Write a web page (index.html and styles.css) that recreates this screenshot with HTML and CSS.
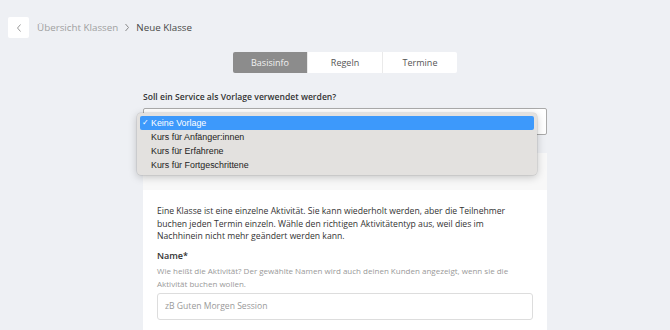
FILE: index.html
```html
<!DOCTYPE html>
<html lang="de">
<head>
  <meta charset="UTF-8" />
  <title>Neue Klasse</title>
  <link rel="stylesheet" href="styles.css">
</head>
<body>
  <div class="topbar">
    <button class="back-btn" aria-label="Zurück">
      <svg width="8" height="10" viewBox="0 0 8 10"><path d="M5.5 1.5 L2.5 5 L5.5 8.5" fill="none" stroke="#9a9a9a" stroke-width="1"/></svg>
    </button>
    <div class="breadcrumb">
      <span class="crumb-muted">Übersicht Klassen</span>
      <svg class="crumb-sep" width="6" height="9" viewBox="0 0 6 9"><path d="M1.5 1 L4.5 4.5 L1.5 8" fill="none" stroke="#8a8a8a" stroke-width="1"/></svg>
      <span class="crumb-current">Neue Klasse</span>
    </div>
  </div>

  <div class="column">
    <div class="tabs">
      <div class="tab active">Basisinfo</div>
      <div class="tab">Regeln</div>
      <div class="tab">Termine</div>
    </div>

    <div class="field-label">Soll ein Service als Vorlage verwendet werden?</div>
    <div class="select-wrap">
      <div class="select-box"></div>
      <ul class="select-menu">
        <li class="selected"><span class="check">✓</span>Keine Vorlage</li>
        <li>Kurs für Anfänger:innen</li>
        <li>Kurs für Erfahrene</li>
        <li>Kurs für Fortgeschrittene</li>
      </ul>
    </div>

    <div class="card">
      <div class="card-head">Basisinfo</div>
      <div class="card-body">
        <p class="intro">
          Eine Klasse ist eine einzelne Aktivität. Sie kann wiederholt werden, aber die Teilnehmer
          buchen jeden Termin einzeln. Wähle den richtigen Aktivitätentyp aus, weil dies im
          Nachhinein nicht mehr geändert werden kann.
        </p>
        <div class="name-label">Name*</div>
        <div class="hint">Wie heißt die Aktivität? Der gewählte Namen wird auch deinen Kunden angezeigt, wenn sie die Aktivität buchen wollen.</div>
        <input type="text" class="text-input" placeholder="zB Guten Morgen Session" />
      </div>
    </div>
  </div>
</body>
</html>
```

FILE: styles.css
```css
body {
  margin: 0;
  background-color: #eef0f4;
  font-family: 'Open Sans', sans-serif;
  color: #333;
  height: 330px;
  overflow: hidden;
}

.topbar {
  display: flex;
  align-items: center;
  padding: 17px 0 0 8px;
}

.back-btn {
  width: 21px;
  height: 21px;
  padding: 0;
  border: none;
  border-radius: 2px;
  background-color: white;
  display: flex;
  align-items: center;
  justify-content: center;
}

.breadcrumb {
  margin-left: 8px;
  font-size: 9.8px;
  display: flex;
  align-items: center;
}

.crumb-muted {
  color: #a0a0a0;
}

.crumb-sep {
  margin: 0 6px 0 6px;
}

.crumb-current {
  color: #484848;
}

.column {
  margin-left: 143px;
  width: 404px;
}

.tabs {
  display: flex;
  justify-content: center;
  margin-top: 14px;
}

.tab {
  width: 74px;
  height: 21px;
  line-height: 21px;
  text-align: center;
  font-size: 9px;
  color: #555;
  background-color: white;
  border-left: 1px solid #eaeaea;
}

.tab:first-child {
  border-left: none;
  border-radius: 2px 0 0 2px;
}

.tab:last-child {
  border-radius: 0 2px 2px 0;
}

.tab.active {
  background-color: #8c8c8c;
  color: #f2f2f2;
}

.field-label {
  margin-top: 18px;
  font-size: 8.6px;
  line-height: 13px;
  font-weight: 600;
  color: #333;
}

.select-wrap {
  position: relative;
  margin-top: 4px;
}

.select-box {
  height: 25px;
  border: 1px solid #aaa;
  border-radius: 2px;
  background-color: white;
}

.select-menu {
  position: absolute;
  top: 5px;
  left: -6px;
  width: 400px;
  margin: 0;
  padding: 3px 3px;
  box-sizing: border-box;
  list-style-type: none;
  background-color: #e3e1df;
  border-radius: 4px;
  box-shadow: 0 2px 8px rgba(0,0,0,0.22), 0 0 0 0.5px rgba(0,0,0,0.12);
  font-family: 'Liberation Sans', sans-serif;
  font-size: 8.9px;
  color: #222;
}

.select-menu li {
  height: 14px;
  line-height: 14px;
  padding-left: 11px;
  border-radius: 2px;
  position: relative;
}

.select-menu li.selected {
  background-color: #3d99fb;
  color: white;
}

.check {
  position: absolute;
  left: 2px;
  font-size: 8px;
}

.card {
  margin-top: 18px;
  background-color: white;
  height: 200px;
}

.card-head {
  height: 37px;
  background-color: #f8f8f8;
  font-size: 8px;
  font-weight: 600;
  text-transform: uppercase;
  color: #888;
  padding: 12px 0 0 14px;
  box-sizing: border-box;
}

.card-body {
  padding: 15px 14px 0 14px;
}

.intro {
  margin: 0;
  padding-right: 12px;
  font-size: 8.65px;
  line-height: 12.5px;
  color: #333;
}

.name-label {
  margin-top: 6px;
  font-size: 9px;
  line-height: 13px;
  font-weight: 600;
  color: #333;
}

.hint {
  margin-top: 2px;
  font-size: 8px;
  line-height: 13px;
  color: #999;
}

.text-input {
  margin-top: 3px;
  width: 100%;
  height: 27px;
  box-sizing: border-box;
  border: 1px solid #ddd;
  border-radius: 3px;
  padding: 0 7px;
  font-family: 'Open Sans', sans-serif;
  font-size: 8.6px;
  color: #333;
}

.text-input::placeholder {
  color: #999;
}
```
